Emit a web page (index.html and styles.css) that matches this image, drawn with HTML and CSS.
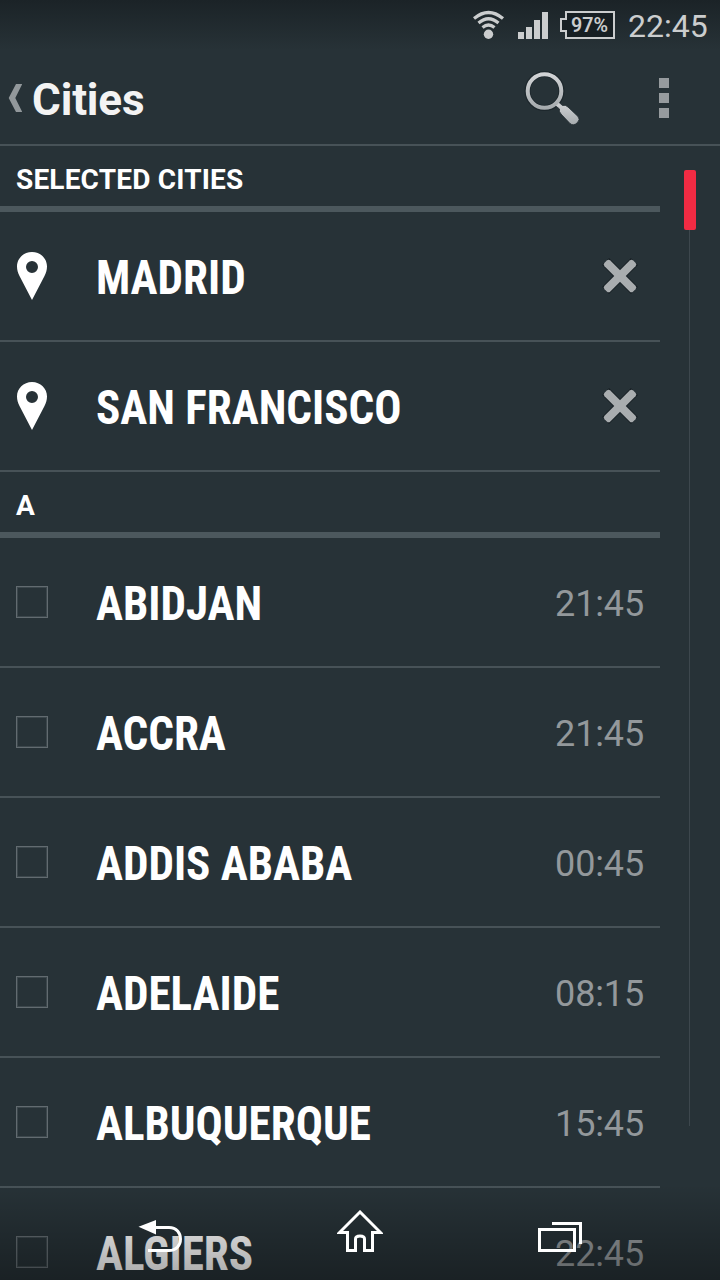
FILE: index.html
```html
<!DOCTYPE html>
<html lang="en">
<head>
<meta charset="utf-8">
<title>Cities</title>
<link rel="stylesheet" href="styles.css">
</head>
<body>
<svg class="defs" width="0" height="0">
  <symbol id="pin" viewBox="0 0 30 48"><path fill="#fff" fill-rule="evenodd" d="M15 0C6.500 0 0 6.500 0 14.500C0 18 1 21 2.500 24L15 48L27.500 24C29 21 30 18 30 14.500C30 6.500 23.500 0 15 0ZM15 9A6 6 0 1 1 15 21A6 6 0 1 1 15 9Z"/></symbol>
  <symbol id="remove" viewBox="0 0 36 36"><g transform="rotate(45 18 18)"><path d="M-2.500 18H38.500M18 -2.500V38.500" stroke="#182025" stroke-width="10"/><g fill="#a9adaf"><rect x="-2.300" y="13.900" width="40.600" height="8.200" rx="2.500"/><rect x="13.900" y="-2.300" width="8.200" height="40.600" rx="2.500"/></g></g></symbol>
</svg>
<div class="screen">
  <header class="status">
    <svg class="status-icons" width="155" height="50" viewBox="0 0 155 50">
      <g fill="none" stroke="#cbcdce" stroke-width="3.200">
        <path d="M1 18.500Q15.500 6.500 30 18.500"/><path d="M5.500 23Q15.500 14.500 25.500 23"/><path d="M9.500 27.500Q15.500 22.500 21.500 27.500"/>
      </g>
      <circle cx="15.500" cy="34.300" r="4.700" fill="#cbcdce"/>
      <path fill="#cbcdce" d="M45 32h6v7h-6zM53 27h6v12h-6zM61 20h6v19h-6zM69 12h6v27h-6z"/>
      <path d="M93 12H141V38H93V31H88V19H93Z" fill="#171f23" stroke="#cbcdce" stroke-width="2"/>
      <text class="battery" x="98" y="32" textLength="37" lengthAdjust="spacingAndGlyphs">97%</text>
    </svg>
    <span class="clock">22:45</span>
  </header>
  <div class="bar">
    <svg class="back" width="14" height="30" viewBox="0 0 14 30"><path fill="#92989b" d="M8 1H14.300L7.300 15L14.300 29H8L.7 15Z"/></svg>
    <h1 class="title">Cities</h1>
    <svg class="search" width="60" height="60" viewBox="0 0 60 60">
      <defs><linearGradient id="metal" x1="0" y1="0" x2="0" y2="1"><stop offset="0" stop-color="#d2d4d6"/><stop offset="1" stop-color="#a6abae"/></linearGradient></defs>
      <circle cx="22.500" cy="23" r="17" fill="none" stroke="#1d272c" stroke-width="6"/>
      <path fill="url(#metal)" stroke="#202a2f" stroke-width=".8" d="M32.500 37L36 33.500L40.500 37.500Q43.500 36.500 46 39L56 48.500Q58.500 51.500 55.500 54.500Q51.500 58.500 48 55.500L39 46Q36.500 43 37.500 41Z"/>
      <circle cx="22.500" cy="23" r="16.800" fill="none" stroke="url(#metal)" stroke-width="4"/>
    </svg>
    <div class="more"><i></i><i></i><i></i></div>
  </div>
  <main class="content">
    <div class="list">
      <h2 class="section">SELECTED CITIES</h2>
      <div class="row"><svg class="pin"><use href="#pin"/></svg><span class="name">MADRID</span><svg class="remove"><use href="#remove"/></svg></div>
      <div class="row"><svg class="pin"><use href="#pin"/></svg><span class="name">SAN FRANCISCO</span><svg class="remove"><use href="#remove"/></svg></div>
      <h2 class="section">A</h2>
      <div class="row"><span class="check"></span><span class="name">ABIDJAN</span><span class="time">21:45</span></div>
      <div class="row"><span class="check"></span><span class="name">ACCRA</span><span class="time">21:45</span></div>
      <div class="row"><span class="check"></span><span class="name">ADDIS ABABA</span><span class="time">00:45</span></div>
      <div class="row"><span class="check"></span><span class="name">ADELAIDE</span><span class="time">08:15</span></div>
      <div class="row"><span class="check"></span><span class="name">ALBUQUERQUE</span><span class="time">15:45</span></div>
      <div class="row"><span class="check"></span><span class="name">ALGIERS</span><span class="time">22:45</span></div>
    </div>
    <div class="scroll"><div class="thumb"></div><div class="track"></div></div>
  </main>
  <nav class="nav">
    <svg width="46" height="46" viewBox="0 0 46 46"><path fill="#fff" d="M1.500 17.800L19 11V25.500Z"/><path d="M18 18.500H32C47.300 18.500 47.300 41.500 32 41.500H11" fill="none" stroke="#fff" stroke-width="3"/></svg>
    <svg width="46" height="44" viewBox="0 0 46 44"><path d="M23 2L2.500 22.500H10.500V40.500H18.500V29Q18.500 26 23 26Q27.500 26 27.500 29V40.500H35.500V22.500H43.500Z" fill="none" stroke="#fff" stroke-width="3"/></svg>
    <svg width="46" height="42" viewBox="0 0 46 42"><path d="M2.500 18.500H37.500V39.500H2.500ZM15 12.500H43.500V33" fill="none" stroke="#fff" stroke-width="3"/></svg>
  </nav>
</div>
</body>
</html>
```
FILE: styles.css
```css
* { box-sizing: border-box; }
body { margin: 0; background: #273237; font-family: Roboto, "Liberation Sans", sans-serif; }
.defs { position: absolute; }
.screen { position: relative; width: 720px; height: 1280px; overflow: hidden; display: flex; flex-direction: column; background: #273237; }
.status { height: 50px; flex: none; display: flex; justify-content: flex-end; padding-right: 12px; background: linear-gradient(#1b2327, #273237); }
.status-icons { flex: none; }
.battery { font-size: 21px; font-weight: 600; fill: #cbcdce; }
.clock { width: 80px; font-size: 32px; line-height: 52px; color: #cbcdce; white-space: nowrap; }
.bar { height: 96px; flex: none; display: flex; align-items: center; padding: 2px 51px 0 8px; border-bottom: 2px solid #475257; }
.back { flex: none; }
.title { margin: 4px 0 0 10px; font-size: 44px; font-weight: 700; line-height: 52px; letter-spacing: -.15px; color: #f3f3f3; flex: 1; }
.search { margin-right: 77px; overflow: visible; }
.more { display: flex; flex-direction: column; gap: 5px; }
.more i { width: 10px; height: 10px; background: #969b9e; }
.content { flex: 1; min-height: 0; display: flex; }
.list { width: 660px; flex: none; }
.section { margin: 0; height: 66px; padding-left: 16px; font-size: 28px; font-weight: 700; line-height: 68px; letter-spacing: .18px; color: #fff; border-bottom: 6px solid #4c585d; }
.row { height: 130px; display: flex; align-items: center; padding: 0 16px; border-bottom: 2px solid #475257; }
.pin { width: 32px; height: 48px; flex: none; }
.check { width: 32px; height: 32px; flex: none; border: 1.5px solid #626b70; box-shadow: inset 0 0 0 1px #3c474c; }
.name { flex: 1; margin-left: 48px; padding-top: 4px; font-family: "Roboto Condensed", Roboto, sans-serif; font-stretch: 75%; font-size: 48px; font-weight: 700; line-height: 52px; color: #fff; white-space: nowrap; transform: scaleX(.94); transform-origin: 0 50%; }
.time { font-size: 36px; line-height: 42px; padding-top: 4px; letter-spacing: -.15px; color: #93989b; }
.remove { width: 36px; height: 36px; margin-right: 6px; overflow: visible; }
.scroll { width: 60px; padding: 24px 24px 0; display: flex; flex-direction: column; align-items: center; }
.thumb { width: 12px; height: 60px; flex: none; border-radius: 2px; background: #f12b43; }
.track { width: 1px; height: 896px; flex: none; background: #3d474d; margin-right: 1px; }
.nav { position: absolute; left: 0; right: 0; bottom: 0; height: 96px; display: flex; align-items: center; justify-content: center; gap: 154px; background: linear-gradient(rgba(0, 0, 0, 0), rgba(0, 0, 0, .34)); }
```
